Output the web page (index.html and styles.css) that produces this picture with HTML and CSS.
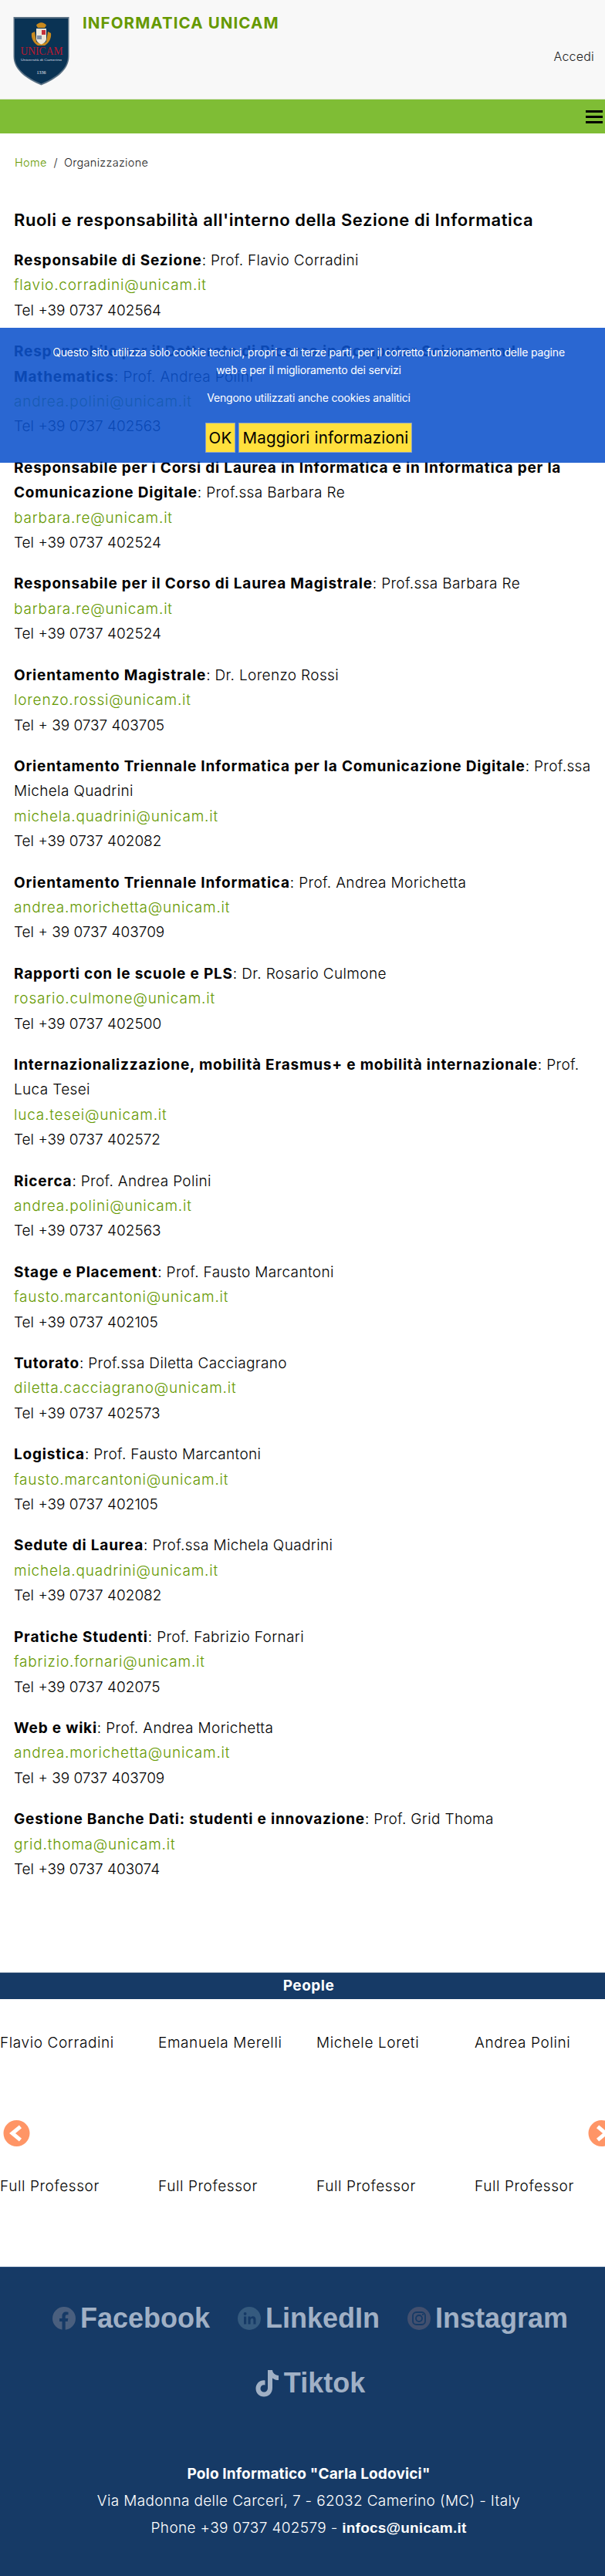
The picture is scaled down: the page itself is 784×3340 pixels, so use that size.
FILE: index.html
```html
<!DOCTYPE html>
<html lang="it">
<head>
<meta charset="utf-8">
<title>Informatica Unicam</title>
<link rel="stylesheet" href="styles.css">
</head>
<body>
<div class="page">
  <header class="top">
    <svg class="logo" viewBox="0 0 73 90" aria-label="UNICAM">
      <path d="M0.5 1H72.5V52C72.5 70 55 82 36.5 89.500C18 82 0.5 70 0.500 52Z" fill="#5a7184"/>
      <path d="M2 3H71V52C71 69 54 80 36.500 87.500C19 80 2 69 2 52Z" fill="#0a3354"/>
      <g transform="translate(0 -2)">
        <path d="M30 14C33 9 40 9 43 14L41 17H32Z" fill="#c98a1e"/>
        <path d="M24 24C23 31 27 37 32 40H41C46 37 50 31 49 24L45 22L43 35C40 38 33 38 30 35L28 22Z" fill="#c98a1e"/>
        <path d="M30 18H43V31C43 35 40 37 36.500 38.500C33 37 30 35 30 31Z" fill="#ece6d8"/>
        <rect x="37" y="20" width="5" height="6" fill="#c22f3c"/>
        <rect x="31" y="27" width="6" height="5" fill="#7f8fa8"/>
      </g>
      <text class="logo-name" x="37" y="50" text-anchor="middle" textLength="55" lengthAdjust="spacingAndGlyphs">UNICAM</text>
      <text class="logo-sub" x="36.500" y="58" text-anchor="middle" textLength="53" lengthAdjust="spacingAndGlyphs">Università di Camerino</text>
      <text class="logo-year" x="36.500" y="75" text-anchor="middle">1336</text>
    </svg>
    <div class="brand">INFORMATICA UNICAM</div>
    <a class="login">Accedi</a>
  </header>
  <nav class="bar">
    <svg class="burger" width="22" height="17" viewBox="0 0 22 17"><rect y="0" width="22" height="3"/><rect y="7" width="22" height="3"/><rect y="14" width="22" height="3"/></svg>
  </nav>
  <div class="crumbs"><a class="green">Home</a><span class="sep">/</span><span>Organizzazione</span></div>
  <main class="content">
    <h1>Ruoli e responsabilità all'interno della Sezione di Informatica</h1>
    <p><b>Responsabile di Sezione</b>: Prof. Flavio Corradini<br><a class="green">flavio.corradini@unicam.it</a><br><span class="tel">Tel +39 0737 402564</span></p>
    <p><b>Responsabile per il Dottorato di Ricerca in Computer Science and Mathematics</b>: Prof. Andrea Polini<br><a class="green">andrea.polini@unicam.it</a><br><span class="tel">Tel +39 0737 402563</span></p>
    <p><b>Responsabile per i Corsi di Laurea in Informatica e in Informatica per la Comunicazione Digitale</b>: Prof.ssa Barbara Re<br><a class="green">barbara.re@unicam.it</a><br><span class="tel">Tel +39 0737 402524</span></p>
    <p><b>Responsabile per il Corso di Laurea Magistrale</b>: Prof.ssa Barbara Re<br><a class="green">barbara.re@unicam.it</a><br><span class="tel">Tel +39 0737 402524</span></p>
    <p><b>Orientamento Magistrale</b>: Dr. Lorenzo Rossi<br><a class="green">lorenzo.rossi@unicam.it</a><br><span class="tel">Tel + 39 0737 403705</span></p>
    <p><b>Orientamento Triennale Informatica per la Comunicazione Digitale</b>: Prof.ssa Michela Quadrini<br><a class="green">michela.quadrini@unicam.it</a><br><span class="tel">Tel +39 0737 402082</span></p>
    <p><b>Orientamento Triennale Informatica</b>: Prof. Andrea Morichetta<br><a class="green">andrea.morichetta@unicam.it</a><br><span class="tel">Tel + 39 0737 403709</span></p>
    <p><b>Rapporti con le scuole e PLS</b>: Dr. Rosario Culmone<br><a class="green">rosario.culmone@unicam.it</a><br><span class="tel">Tel +39 0737 402500</span></p>
    <p><b>Internazionalizzazione, mobilità Erasmus+ e mobilità internazionale</b>: Prof. Luca Tesei<br><a class="green">luca.tesei@unicam.it</a><br><span class="tel">Tel +39 0737 402572</span></p>
    <p><b>Ricerca</b>: Prof. Andrea Polini<br><a class="green">andrea.polini@unicam.it</a><br><span class="tel">Tel +39 0737 402563</span></p>
    <p><b>Stage e Placement</b>: Prof. Fausto Marcantoni<br><a class="green">fausto.marcantoni@unicam.it</a><br><span class="tel">Tel +39 0737 402105</span></p>
    <p><b>Tutorato</b>: Prof.ssa Diletta Cacciagrano<br><a class="green">diletta.cacciagrano@unicam.it</a><br><span class="tel">Tel +39 0737 402573</span></p>
    <p><b>Logistica</b>: Prof. Fausto Marcantoni<br><a class="green">fausto.marcantoni@unicam.it</a><br><span class="tel">Tel +39 0737 402105</span></p>
    <p><b>Sedute di Laurea</b>: Prof.ssa Michela Quadrini<br><a class="green">michela.quadrini@unicam.it</a><br><span class="tel">Tel +39 0737 402082</span></p>
    <p><b>Pratiche Studenti</b>: Prof. Fabrizio Fornari<br><a class="green">fabrizio.fornari@unicam.it</a><br><span class="tel">Tel +39 0737 402075</span></p>
    <p><b>Web e wiki</b>: Prof. Andrea Morichetta<br><a class="green">andrea.morichetta@unicam.it</a><br><span class="tel">Tel + 39 0737 403709</span></p>
    <p><b>Gestione Banche Dati: studenti e innovazione</b>: Prof. Grid Thoma<br><a class="green">grid.thoma@unicam.it</a><br><span class="tel">Tel +39 0737 403074</span></p>
  </main>
  <section class="people">
    <h2>People</h2>
    <div class="carousel">
      <div class="row names"><span>Flavio Corradini</span><span>Emanuela Merelli</span><span>Michele Loreti</span><span>Andrea Polini</span></div>
      <div class="row roles"><span>Full Professor</span><span>Full Professor</span><span>Full Professor</span><span>Full Professor</span></div>
      <svg class="arrow prev" viewBox="0 0 34 34"><circle cx="17" cy="17" r="17"/><path d="M20 10L11.500 17L20 24"/></svg>
      <svg class="arrow next" viewBox="0 0 34 34"><circle cx="17" cy="17" r="17"/><path d="M14 10L22.500 17L14 24"/></svg>
    </div>
  </section>
  <footer class="foot">
    <div class="social">
      <a class="soc"><svg class="ico" viewBox="0 0 30 30"><circle cx="15" cy="15" r="15" fill="#4a5f7e"/><path d="M12.500 30V19H9V15H12.500V12C12.500 8.500 14.500 6.500 17.700 6.500C19.200 6.500 20.500 6.800 20.500 6.800V10.200H18.800C17.200 10.200 16.700 11.200 16.700 12.200V15H20.300L19.700 19H16.700V30Z" fill="#163a66"/></svg>Facebook</a>
      <a class="soc"><svg class="ico" viewBox="0 0 30 30"><circle cx="15" cy="15" r="15" fill="#355a7e"/><rect x="8" y="12.500" width="3.200" height="10" fill="#163a66"/><circle cx="9.600" cy="9" r="1.900" fill="#163a66"/><path d="M13.500 22.500V12.500H16.500V14C17.300 12.800 18.500 12.200 19.800 12.200C22.300 12.200 23.500 13.800 23.500 16.800V22.500H20.400V17.300C20.400 15.700 19.800 14.900 18.700 14.900C17.400 14.900 16.600 15.800 16.600 17.300V22.500Z" fill="#163a66"/></svg>LinkedIn</a>
      <a class="soc"><svg class="ico" viewBox="0 0 30 30"><circle cx="15" cy="15" r="15" fill="#42506f"/><rect x="7" y="7" width="16" height="16" rx="4.500" fill="none" stroke="#163a66" stroke-width="1.800"/><circle cx="15" cy="15" r="4" fill="none" stroke="#163a66" stroke-width="1.800"/><circle cx="20" cy="10" r="1.100" fill="#163a66"/></svg>Instagram</a>
      <a class="soc"><svg class="ico tt" viewBox="0 0 31 36"><path d="M16 1H22C22.500 5 25 7.500 30 8V14C26.800 14 24.200 13 22 11.400V24C22 31 17 35.500 11 35.500C5 35.500 0.500 31 0.500 25C0.500 18.500 6 13.500 12.500 14.500V20.500C9.500 19.500 6.500 21.500 6.500 25C6.500 27.800 8.500 29.500 11 29.500C14 29.500 16 27.500 16 24Z" fill="#a0b0c5"/></svg>Tiktok</a>
    </div>
    <address class="contact">
      <strong class="polo">Polo Informatico "Carla Lodovici"</strong>
      <span>Via Madonna delle Carceri, 7 - 62032 Camerino (MC) - Italy</span>
      <span>Phone +39 0737 402579 - <b class="mail">infocs@unicam.it</b></span>
    </address>
  </footer>
  <aside class="cookie">
    <p class="cookie-text">Questo sito utilizza solo cookie tecnici, propri e di terze parti, per il corretto funzionamento delle pagine<br>web e per il miglioramento dei servizi</p>
    <p class="cookie-text second">Vengono utilizzati anche cookies analitici</p>
    <div class="cookie-btns"><button class="btn">OK</button><button class="btn">Maggiori informazioni</button></div>
  </aside>
</div>
</body>
</html>
```
FILE: styles.css
```css
html { overflow-x: hidden; }
body { margin: 0; background: #fff; color: #000; font-family: Inter, "Liberation Sans", sans-serif; font-size: 19px; font-weight: 350; letter-spacing: .35px; }
.page { position: relative; width: 800px; overflow: hidden; }
a { text-decoration: none; }
.green { color: #669900; letter-spacing: .8px; }

.top { position: relative; display: flex; align-items: flex-start; height: 128px; background: #f8f8f8; border-bottom: 1px solid #dfe8d4; }
.logo { width: 73px; height: 90px; margin: 21px 0 0 17px; flex: none; }
.logo text { letter-spacing: 0; font-weight: 400; }
.logo-name { font-family: "Liberation Serif", serif; font-size: 15px; fill: #b8182e; }
.logo-sub { font-family: "Liberation Sans", sans-serif; font-size: 4px; fill: #d8dfe6; }
.logo-year { font-family: "Liberation Serif", serif; font-size: 6px; fill: #e6eaee; }
.brand { margin: 18px 0 0 17px; font-size: 20.5px; line-height: 24px; font-weight: 700; color: #669900; letter-spacing: 1.1px; white-space: nowrap; }
.login { margin: 63px 30px 0 auto; font-size: 16px; line-height: 20px; color: #222; letter-spacing: .2px; }
.bar { display: flex; justify-content: flex-end; align-items: flex-start; height: 44px; background: #7fbd35; }
.burger { margin: 14px 19px 0 0; }
.burger rect { fill: #000; }

.crumbs { display: flex; padding: 29px 0 0 19px; font-size: 14.5px; line-height: 18px; color: #222; letter-spacing: .3px; }
.crumbs .green { letter-spacing: .3px; }
.sep { margin: 0 8px 0 9px; }
.content { padding: 0 18px; }
h1 { margin: 50px 0 22px; font-size: 22px; line-height: 30px; font-weight: 600; letter-spacing: .55px; }
.content p { margin: 21px 0; line-height: 32.4px; }
.content b { font-weight: 700; letter-spacing: .8px; }
.tel { letter-spacing: 0; }

.people { margin-top: 117px; }
h2 { margin: 0; height: 34px; border-top: 1px solid #a9b5c4; background: #163a66; color: #fff; font-size: 19px; line-height: 34px; font-weight: 700; letter-spacing: .5px; text-align: center; }
.carousel { position: relative; height: 347px; }
.row { position: absolute; left: 0; display: grid; grid-template-columns: repeat(4, 205px); line-height: 24px; white-space: nowrap; letter-spacing: .6px; }
.names { top: 45px; }
.roles { top: 231px; }
.arrow { position: absolute; top: 157px; width: 35px; height: 34px; }
.arrow circle { fill: #ff9566; }
.arrow path { fill: none; stroke: #fff; stroke-width: 5px; stroke-linecap: square; }
.prev { left: 4px; }
.next { left: 762px; }

.foot { box-sizing: border-box; height: 401px; border-top: 1px solid #2d5180; background: #163a66; color: #fff; text-align: center; }
.social { display: flex; flex-wrap: wrap; justify-content: center; gap: 0 36px; padding: 24px 48px 0 52px; }
.soc { display: flex; align-items: center; gap: 6px; height: 84px; font-family: "Liberation Sans", sans-serif; font-size: 36px; font-weight: 700; color: #a0b0c5; letter-spacing: 0; }
.ico { width: 30px; height: 30px; flex: none; }
.tt { width: 31px; height: 36px; }
.contact { display: flex; flex-direction: column; margin-top: 58px; font-style: normal; line-height: 35px; }
.polo { font-weight: 700; letter-spacing: .15px; }
.mail { font-family: "Liberation Sans", sans-serif; font-size: 19px; font-weight: 700; letter-spacing: .2px; }

.cookie { position: absolute; top: 425px; left: 0; box-sizing: border-box; width: 800px; height: 175px; padding-top: 20px; background: rgba(13, 82, 204, .88); color: #fff; text-align: center; }
.cookie-text { margin: 0; font-size: 14px; font-weight: 400; line-height: 23px; letter-spacing: -.18px; }
.second { margin-top: 13px; }
.cookie-btns { display: flex; justify-content: center; gap: 4px; margin-top: 21px; }
.btn { height: 39px; padding: 0 4px; border: 1px solid #8ba0c4; background: #ffe03d; color: #000; font-family: inherit; font-size: 20.5px; font-weight: 400; letter-spacing: .2px; }
```
